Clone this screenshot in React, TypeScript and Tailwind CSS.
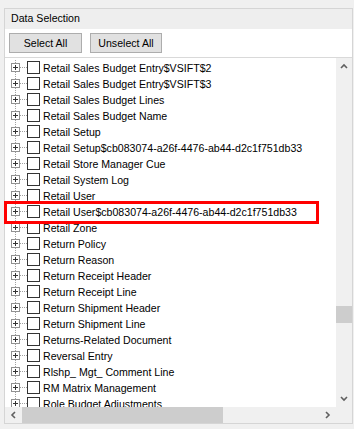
import React from 'react';

const items = [
  'Retail Sales Budget Entry$VSIFT$2',
  'Retail Sales Budget Entry$VSIFT$3',
  'Retail Sales Budget Lines',
  'Retail Sales Budget Name',
  'Retail Setup',
  'Retail Setup$cb083074-a26f-4476-ab44-d2c1f751db33',
  'Retail Store Manager Cue',
  'Retail System Log',
  'Retail User',
  'Retail User$cb083074-a26f-4476-ab44-d2c1f751db33',
  'Retail Zone',
  'Return Policy',
  'Return Reason',
  'Return Receipt Header',
  'Return Receipt Line',
  'Return Shipment Header',
  'Return Shipment Line',
  'Returns-Related Document',
  'Reversal Entry',
  'Rlshp_ Mgt_ Comment Line',
  'RM Matrix Management',
  'Role Budget Adjustments',
];

function Connector() {
  return (
    <svg width="22" height="16" className="shrink-0" shapeRendering="crispEdges">
      <line x1="10.5" y1="0" x2="10.5" y2="16" stroke="#a0a0a0" strokeDasharray="1 1" />
      <line x1="15" y1="7.5" x2="22" y2="7.5" stroke="#a0a0a0" strokeDasharray="1 1" />
      <rect x="6.5" y="3.5" width="8" height="8" fill="#fff" stroke="#919191" />
      <line x1="8" y1="7.5" x2="13" y2="7.5" stroke="#333" />
      <line x1="10.5" y1="5" x2="10.5" y2="10" stroke="#333" />
    </svg>
  );
}

function Chevron({ dir }: { dir: 'up' | 'down' | 'left' | 'right' }) {
  const pts = {
    up: '1,5 4,2 7,5',
    down: '1,2 4,5 7,2',
    left: '5,1 2,4 5,7',
    right: '2,1 5,4 2,7',
  }[dir];
  return (
    <svg width="8" height="8">
      <polyline points={pts} fill="none" stroke="#606060" strokeWidth="1.6" />
    </svg>
  );
}

export default function App() {
  return (
    <div className="relative w-[354px] h-[429px] overflow-hidden bg-[#f0f0f0] font-['Liberation_Sans',Arial,sans-serif] text-black">
      <div className="ml-[4px] mt-[8px] w-[349px] border border-[#d5d5d5] flex flex-col">
        {/* header */}
        <div className="h-[20px] bg-[#eeeeee] pl-[6px] flex items-center text-[10.6px]">
          Data Selection
        </div>

        {/* buttons */}
        <div className="h-[29px] bg-white pl-[4px] pt-[4px] flex gap-[8px] border-b border-[#d9d9d9]">
          <button className="w-[73px] h-[20px] bg-[#e1e1e1] border border-[#adadad] text-[10.6px] leading-none">
            Select All
          </button>
          <button className="w-[72px] h-[20px] bg-[#e1e1e1] border border-[#adadad] text-[10.6px] leading-none">
            Unselect All
          </button>
        </div>

        {/* tree + vertical scrollbar */}
        <div className="h-[349px] flex">
          <div className="w-[331px] bg-white overflow-hidden pt-[2px]">
            {items.map((t) => (
              <div key={t} className="h-[16px] flex items-center">
                <Connector />
                <div className="w-[13px] h-[13px] border border-[#333333] bg-white shrink-0 mb-[1px]" />
                <span className="ml-[3px] text-[10.6px] whitespace-nowrap leading-none">{t}</span>
              </div>
            ))}
          </div>
          <div className="w-[16px] bg-[#f0f0f0] flex flex-col">
            <div className="h-[17px] flex items-center justify-center">
              <Chevron dir="up" />
            </div>
            <div className="flex-1 pt-[231px]">
              <div className="h-[17px] bg-[#cdcdcd]" />
            </div>
            <div className="h-[17px] flex items-center justify-center">
              <Chevron dir="down" />
            </div>
          </div>
        </div>

        {/* horizontal scrollbar */}
        <div className="h-[16px] flex">
          <div className="w-[331px] flex bg-[#f0f0f0]">
            <div className="w-[17px] flex items-center justify-center">
              <Chevron dir="left" />
            </div>
            <div className="flex-1">
              <div className="w-[201px] h-full bg-[#cdcdcd]" />
            </div>
            <div className="w-[17px] flex items-center justify-center">
              <Chevron dir="right" />
            </div>
          </div>
          <div className="w-[16px] bg-[#f0f0f0]" />
        </div>
      </div>

      {/* highlight annotation */}
      <div className="absolute left-[4px] top-[201px] w-[315px] h-[23px] border-[3px] border-[#ff0000]" />
    </div>
  );
}
